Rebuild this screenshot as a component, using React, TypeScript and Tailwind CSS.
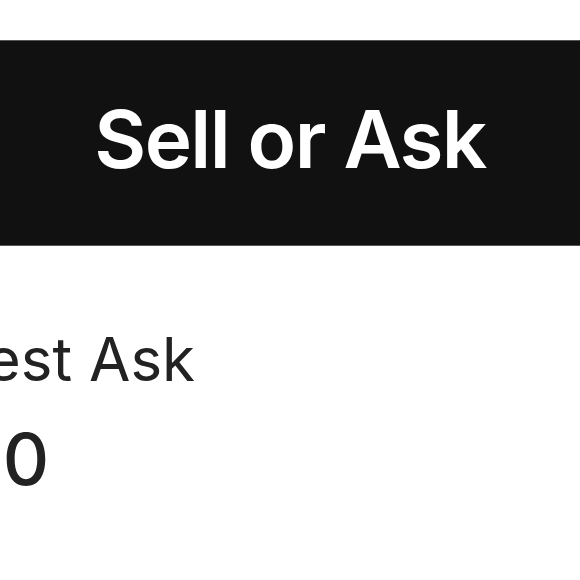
export default function App() {
  return (
    <div className="w-[580px] h-[580px] overflow-hidden bg-white font-['Inter','Liberation_Sans',sans-serif]">
      <div className="pt-[40px]">
        <button className="w-full h-[206px] bg-[#111111] border-y border-[#555555] text-white text-[80px] font-semibold tracking-[-0.02em] leading-none flex items-center justify-center pb-[8px]">
          Sell or Ask
        </button>
      </div>
      <div className="mt-[83px] text-[#222222]">
        <p className="ml-[-131px] text-[60px] leading-none whitespace-nowrap">Lowest Ask</p>
        <p className="mt-[34px] ml-[-118px] text-[72px] font-medium leading-none whitespace-nowrap">$120</p>
      </div>
    </div>
  )
}
